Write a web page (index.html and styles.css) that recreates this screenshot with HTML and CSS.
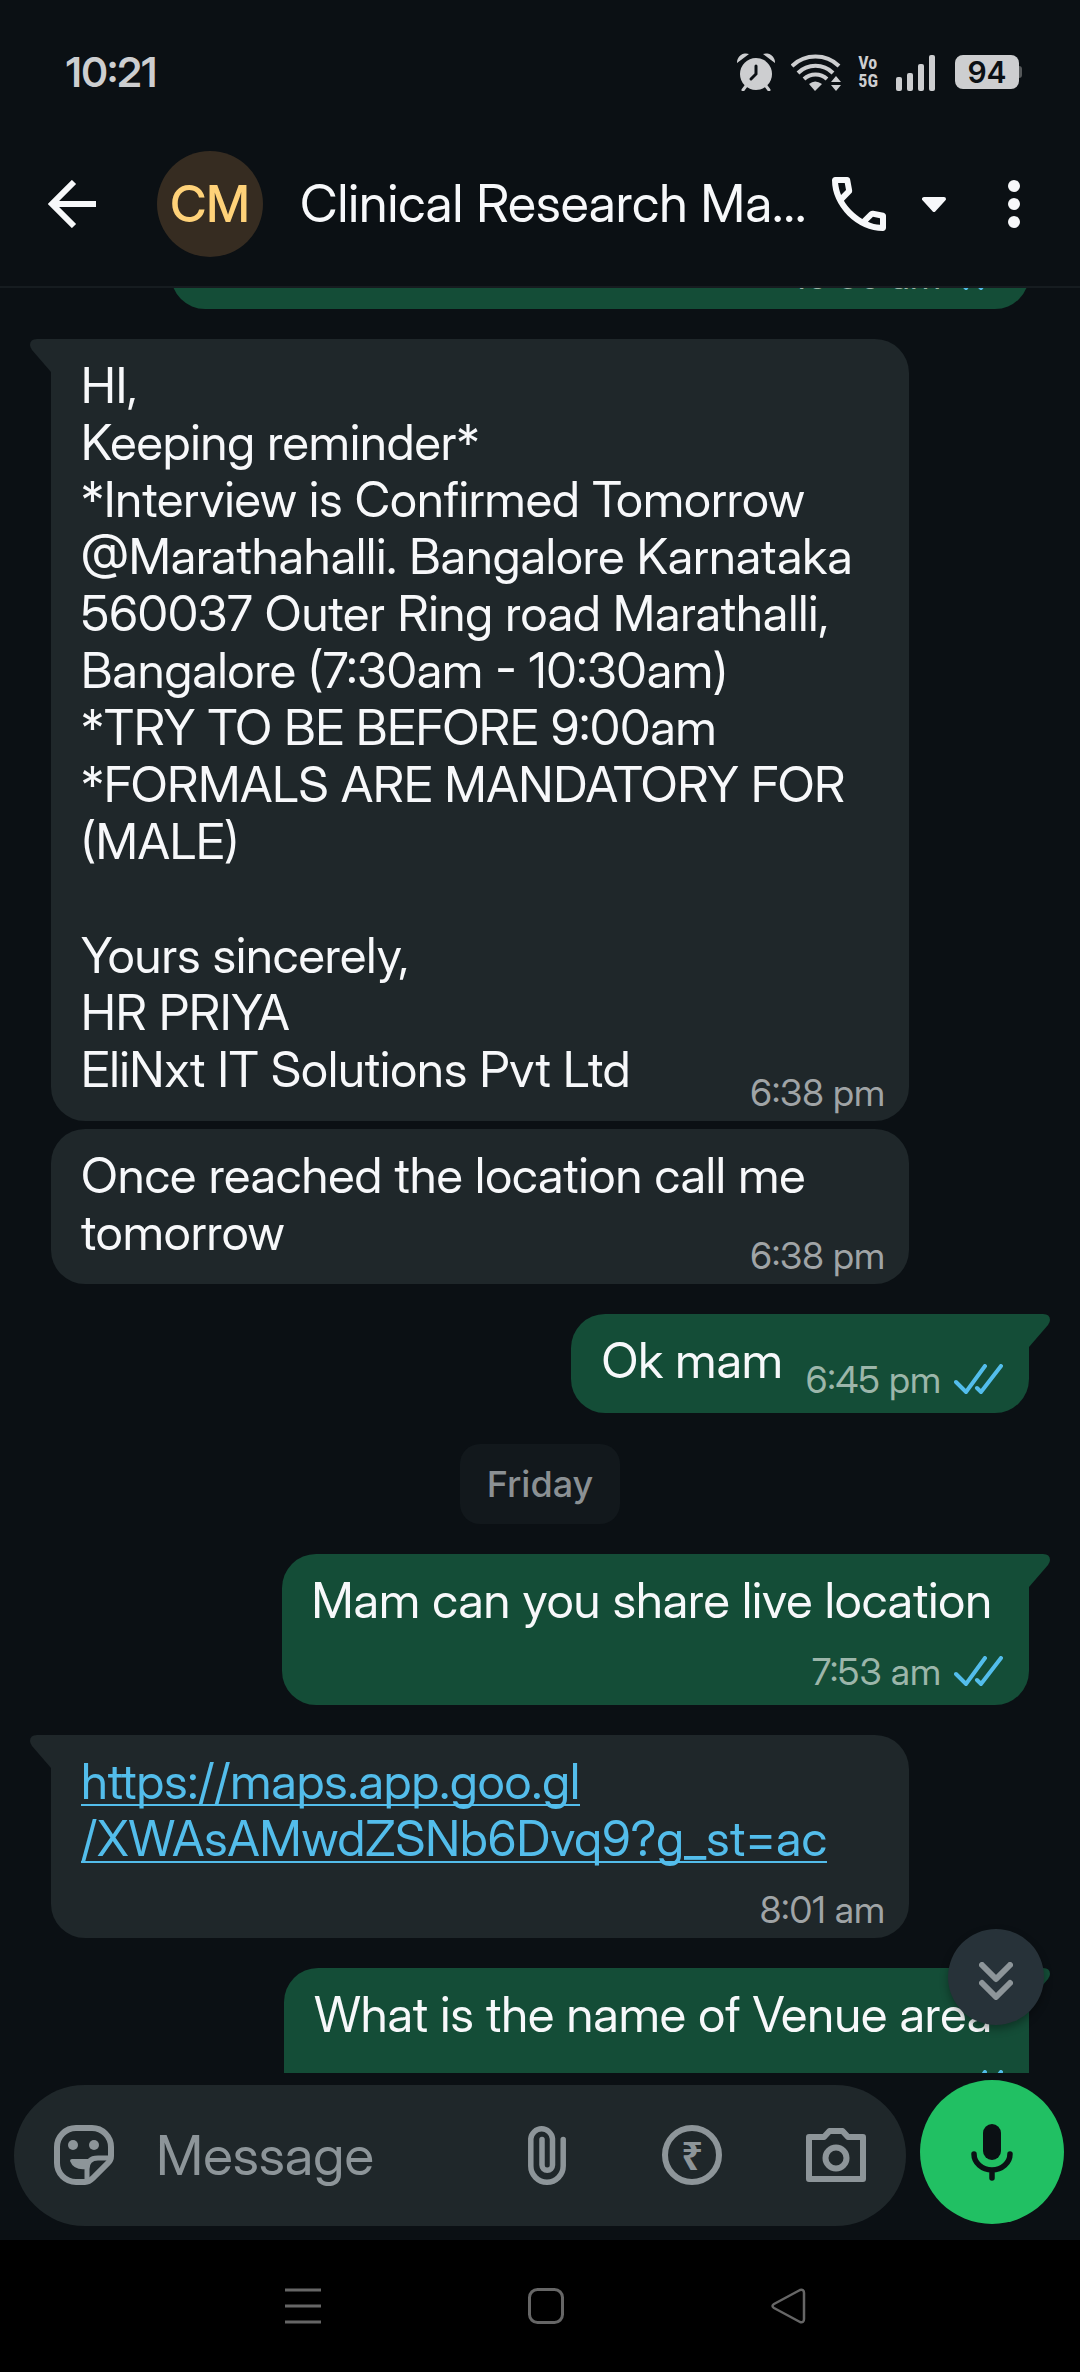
FILE: index.html
```html
<!DOCTYPE html>
<html lang="en">
<head>
<meta charset="utf-8">
<meta name="viewport" content="width=device-width, initial-scale=1">
<title>Clinical Research Ma...</title>
<link rel="stylesheet" href="styles.css">
</head>
<body>
<svg class="defs" aria-hidden="true">
  <symbol id="tail" viewBox="0 0 22 33"><path d="M22 0H7Q0 0 0 6Q0 8 2 11L21 33H22Z" fill="currentColor"/></symbol>
  <symbol id="read" viewBox="0 0 49 30"><path d="M2 18L12 28L31 2M23 24L27 28L47 2" fill="none" stroke="currentColor" stroke-width="4" stroke-linecap="round"/></symbol>
</svg>

<div class="status">
  <time class="clock">10:21</time>
  <div class="indicators">
    <svg class="alarm" width="38" height="38" viewBox="0 0 38 38" fill="#cdced0">
      <circle cx="19" cy="21" r="16"/>
      <path d="M0 10A9 9 0 0 1 12 1ZM38 10A9 9 0 0 0 26 1Z"/>
      <path d="M9 33L6 37M29 33L32 37" stroke="#cdced0" stroke-width="3" stroke-linecap="round"/>
      <path d="M19 13V21L14 26" fill="none" stroke="#0b1014" stroke-width="3" stroke-linecap="round"/>
    </svg>
    <svg class="wifi" width="52" height="37" viewBox="0 0 52 37" fill="none" stroke="#cdced0" stroke-width="4">
      <path d="M1 12A34 34 0 0 1 48 12M7 19A25 25 0 0 1 42 19M13 25A17 17 0 0 1 36 25"/>
      <path d="M18 30Q24 25 31 30L24 37Z" fill="#cdced0" stroke="none"/>
      <path d="M40 28L45 22L50 28ZM40 31L45 37L50 31Z" fill="#cdced0" stroke="none"/>
    </svg>
    <span class="network"><span>Vo</span><span>5G</span></span>
    <svg class="signal" width="40" height="37" viewBox="0 0 40 37" fill="#cdced0">
      <rect x="0" y="23" width="6" height="14" rx="2"/><rect x="11" y="19" width="6" height="18" rx="2"/><rect x="22" y="10" width="6" height="27" rx="2"/><rect x="33" y="1" width="6" height="36" rx="2"/>
    </svg>
    <span class="battery">94</span>
  </div>
</div>

<header class="header">
  <button class="icon-button back" aria-label="Back">
    <svg width="48" height="48" viewBox="0 0 48 48" fill="none" stroke="currentColor" stroke-width="6"><path d="M26 2L4 24L26 46M4 24H48"/></svg>
  </button>
  <div class="avatar">CM</div>
  <h1 class="title">Clinical Research Ma...</h1>
  <button class="icon-button call" aria-label="Call">
    <svg width="54" height="54" viewBox="3 3 18 18" fill="currentColor"><path d="M19.95 21q-3.125 0-6.175-1.362T8.225 15.8q-2.5-2.5-3.862-5.55T3 4.05q0-.45.3-.75T4.05 3H8.1q.35 0 .625.238t.325.562l.65 3.5q.05.4-.025.675T9.4 8.45L6.975 10.9q.5.925 1.187 1.787t1.513 1.663q.775.775 1.625 1.438T13.1 17l2.35-2.35q.225-.225.588-.337t.712-.063l3.45.7q.35.1.575.363T21 15.9v4.05q0 .45-.3.75t-.75.3M6.025 9l1.65-1.65L7.25 5H5.025q.125 1.025.35 2.025T6.025 9m8.95 8.95q.975.425 1.988.675T19 18.95v-2.2l-2.35-.475z"/></svg>
    <svg width="24" height="15" viewBox="0 0 24 15" fill="currentColor" stroke="currentColor" stroke-width="4" stroke-linejoin="round"><path d="M2 2H22L12 13Z"/></svg>
  </button>
  <button class="icon-button" aria-label="More options">
    <svg width="12" height="48" viewBox="0 0 12 48" fill="currentColor"><circle cx="6" cy="6" r="6"/><circle cx="6" cy="24" r="6"/><circle cx="6" cy="42" r="6"/></svg>
  </button>
</header>

<main class="chat">
  <div class="messages">
    <article class="bubble out long stack">
      <p class="meta"><time>10:30 am</time><svg class="ticks"><use href="#read"/></svg></p>
    </article>
    <article class="bubble in long first">
      <svg class="tail"><use href="#tail"/></svg>
      <p class="text">HI,<br>Keeping reminder*<br>*Interview is Confirmed Tomorrow<br>@Marathahalli. Bangalore Karnataka<br>560037 Outer Ring road Marathalli,<br>Bangalore (7:30am - 10:30am)<br>*TRY TO BE BEFORE 9:00am<br>*FORMALS ARE MANDATORY FOR<br>(MALE)<br><br>Yours sincerely,<br>HR PRIYA<br>EliNxt IT Solutions Pvt Ltd</p>
      <p class="meta"><time>6:38 pm</time></p>
    </article>
    <article class="bubble in long">
      <p class="text">Once reached the location call me<br>tomorrow</p>
      <p class="meta"><time>6:38 pm</time></p>
    </article>
    <article class="bubble out first inline">
      <svg class="tail"><use href="#tail"/></svg>
      <p class="text">Ok mam</p>
      <p class="meta"><time>6:45 pm</time><svg class="ticks"><use href="#read"/></svg></p>
    </article>
    <p class="day">Friday</p>
    <article class="bubble out first stack">
      <svg class="tail"><use href="#tail"/></svg>
      <p class="text">Mam can you share live location</p>
      <p class="meta"><time>7:53 am</time><svg class="ticks"><use href="#read"/></svg></p>
    </article>
    <article class="bubble in long first stack">
      <svg class="tail"><use href="#tail"/></svg>
      <p class="text"><a href="https://maps.app.goo.gl/XWAsAMwdZSNb6Dvq9?g_st=ac">https://maps.app.goo.gl<br>/XWAsAMwdZSNb6Dvq9?g_st=ac</a></p>
      <p class="meta"><time>8:01 am</time></p>
    </article>
    <article class="bubble out first stack">
      <svg class="tail"><use href="#tail"/></svg>
      <p class="text">What is the name of Venue area</p>
      <p class="meta"><svg class="ticks"><use href="#read"/></svg></p>
    </article>
  </div>
  <button class="scroll-down" aria-label="Scroll to latest">
    <svg width="34" height="38" viewBox="0 0 34 38" fill="none" stroke="currentColor" stroke-width="6" stroke-linecap="round" stroke-linejoin="round"><path d="M3 3L17 17L31 3M3 21L17 35L31 21"/></svg>
  </button>
</main>

<form class="composer">
  <div class="field">
    <button type="button" class="icon-button" aria-label="Stickers">
      <svg width="60" height="60" viewBox="0 0 60 60" fill="none" stroke="currentColor" stroke-width="6"><path d="M31 57H22A19 19 0 0 1 3 38V22A19 19 0 0 1 22 3H38A19 19 0 0 1 57 22V31Q57 35 54 38L39 53Q35 57 31 57Z"/><path d="M33 56V44Q33 33 44 33H56" stroke-width="5"/><g fill="currentColor" stroke="none"><circle cx="19" cy="20" r="5"/><circle cx="40" cy="20" r="5"/><path d="M16 36Q16 34 18 34H38L33 44Q20 46 16 36Z"/></g></svg>
    </button>
    <input class="input" type="text" placeholder="Message" aria-label="Message">
    <button type="button" class="icon-button" aria-label="Attach">
      <svg width="38" height="60" viewBox="0 0 38 60" fill="none" stroke="currentColor" stroke-width="5.5" stroke-linecap="round"><path d="M35.2 14.5V41A16.2 16.2 0 0 1 2.8 41V13.7A10.9 10.9 0 0 1 24.5 13.7V40A5.2 5.2 0 0 1 14 40V14.5"/></svg>
    </button>
    <button type="button" class="icon-button rupee" aria-label="Payment">₹</button>
    <button type="button" class="icon-button" aria-label="Camera">
      <svg width="60" height="60" viewBox="0 -3 60 60" fill="none" stroke="currentColor" stroke-width="6" stroke-linejoin="round"><path d="M3 9H18L23.500 3H36.500L42 9H57V51H3Z"/><circle cx="30" cy="30" r="10.500"/></svg>
    </button>
  </div>
  <button type="button" class="mic" aria-label="Record voice message">
    <svg width="42" height="57" viewBox="0 0 42 57" fill="none" stroke="currentColor" stroke-width="5.500" stroke-linecap="round"><rect x="12" y="0" width="18" height="36" rx="9" fill="currentColor" stroke="none"/><path d="M3 30A18 16 0 0 0 39 30M21 46V54"/></svg>
  </button>
</form>

<nav class="system-nav">
  <button class="icon-button" aria-label="Recent apps"><svg width="36" height="36" viewBox="0 0 36 36" stroke="currentColor" stroke-width="3"><path d="M0 2H36M0 18H36M0 34H36"/></svg></button>
  <button class="icon-button" aria-label="Home"><svg width="36" height="36" viewBox="0 0 36 36" fill="none" stroke="currentColor" stroke-width="3"><rect x="1.500" y="1.500" width="33" height="33" rx="8"/></svg></button>
  <button class="icon-button" aria-label="Back"><svg width="36" height="36" viewBox="0 0 36 36" fill="none" stroke="currentColor" stroke-width="2.500" stroke-linejoin="round"><path d="M3 16L29 2Q33 1 33 5V31Q33 35 29 34L3 20Q0 18 3 16Z"/></svg></button>
</nav>
</body>
</html>
```
FILE: styles.css
```css
* { box-sizing: border-box; margin: 0; padding: 0; }

body {
  display: flex;
  flex-direction: column;
  height: 100vh;
  background: #0b1014;
  color: #f7f8fa;
  font-family: "Inter Display", Inter, "Liberation Sans", sans-serif;
}

button, input { border: 0; background: none; color: inherit; font: inherit; }
svg { display: block; flex: none; }
.defs { position: absolute; width: 0; height: 0; }
.icon-button { display: flex; align-items: center; justify-content: center; flex: none; }

/* Status bar */
.status {
  display: flex;
  align-items: center;
  justify-content: space-between;
  flex: none;
  padding: 48px 61px 24px 66px;
  color: #cdced0;
}
.clock { font-size: 41px; font-weight: 600; line-height: 48px; }
.indicators { display: flex; align-items: center; }
.alarm { margin-right: 16px; }
.wifi { margin-right: 15px; }
.network {
  display: flex;
  flex-direction: column;
  margin-right: 18px;
  font: bold 18px/18px "Roboto Condensed", "Liberation Sans Narrow", "Liberation Sans", sans-serif;
}
.signal { margin-right: 19px; }
.battery {
  position: relative;
  width: 64px;
  border-radius: 8px;
  background: #cdced0;
  color: #0b1014;
  font-family: Inter, sans-serif;
  font-size: 30px;
  font-weight: 600;
  line-height: 34px;
  text-align: center;
}
.battery::after {
  content: "";
  position: absolute;
  top: 11px;
  right: -3px;
  width: 3px;
  height: 12px;
  border-radius: 0 3px 3px 0;
  background: #55585a;
}

/* Conversation header */
.header {
  display: flex;
  align-items: center;
  flex: none;
  padding: 31px 60px 29px 48px;
  border-bottom: 2px solid #161c20;
}
.back { margin-right: 61px; }
.avatar {
  flex: none;
  width: 106px;
  border-radius: 50%;
  background: #362c21;
  color: #ffd279;
  font-size: 50px;
  font-weight: 500;
  line-height: 106px;
  text-align: center;
}
.title {
  flex: 1;
  min-width: 0;
  margin-left: 37px;
  font-size: 52px;
  font-weight: 400;
  line-height: 60px;
  white-space: nowrap;
}
.call { gap: 36px; margin-right: 62px; }

/* Messages */
.chat { position: relative; flex: 1; min-height: 0; overflow: hidden; }
.messages {
  display: flex;
  flex-direction: column;
  margin-top: -52px;
  padding: 0 51px;
}
.bubble {
  position: relative;
  display: grid;
  width: fit-content;
  margin-top: 8px;
  border-radius: 34px;
}
.bubble:first-child { margin-top: 0; }
.bubble.first { margin-top: 30px; }
.in { align-self: flex-start; padding: 18px 24px 6px 30px; background: #1f272a; color: #f7f8fa; }
.out { align-self: flex-end; padding: 18px 26px 11px 30px; background: #144d37; }
.long { width: calc(100% - 120px); }
.in.first { border-top-left-radius: 0; }
.out.first { border-top-right-radius: 0; }
.tail { position: absolute; top: 0; width: 22px; height: 33px; }
.in .tail { left: -21px; color: #1f272a; }
.out .tail { right: -21px; color: #144d37; transform: scaleX(-1); }

.text { grid-area: 1 / 1; margin-bottom: 17px; font-size: 49px; line-height: 57px; }
.meta {
  display: flex;
  grid-area: 1 / 1;
  align-self: end;
  justify-self: end;
  gap: 13px;
  color: #a0a4a6;
  font-size: 37px;
  line-height: 44px;
}
.out .meta { color: #9cb6aa; }
.ticks { width: 49px; height: 30px; margin-top: 6px; color: #53bdeb; }
.stack, .inline { display: flex; }
.stack { flex-direction: column; gap: 21px; }
.stack .text { margin: 0; padding-right: 11px; }
.stack .meta { align-self: flex-end; min-height: 44px; }
.inline { gap: 23px; }
.inline .text { margin-bottom: 13px; }
.text a { color: #53bdeb; text-decoration-thickness: 2px; text-underline-offset: 5px; text-decoration-skip-ink: none; }

.day {
  align-self: center;
  margin-top: 31px;
  padding: 0 27px;
  border-radius: 20px;
  background: #12181c;
  color: #8b9093;
  font-family: Inter, sans-serif;
  font-size: 36px;
  font-weight: 500;
  line-height: 80px;
}

.scroll-down {
  position: absolute;
  right: 36px;
  bottom: 48px;
  display: flex;
  align-items: center;
  justify-content: center;
  width: 96px;
  height: 96px;
  padding-top: 8px;
  border-radius: 50%;
  background: #273239;
  box-shadow: 0 4px 8px #0005;
  color: #8d9599;
}

/* Composer */
.composer {
  display: flex;
  align-items: flex-end;
  flex: none;
  gap: 14px;
  padding: 7px 16px 14px 14px;
}
.field {
  display: flex;
  align-items: center;
  flex: 1;
  min-width: 0;
  padding: 35px 40px 36px;
  border-radius: 71px;
  background: #1f272a;
  color: #8d9599;
}
.input { flex: 1; min-width: 0; height: 70px; margin-left: 42px; font-size: 55px; line-height: 70px; outline: 0; }
.input::placeholder { color: #8d9599; opacity: 1; }
.rupee {
  width: 60px;
  height: 60px;
  margin: 0 84px 0 96px;
  border: 6px solid currentColor;
  border-radius: 50%;
  font: bold 38px/48px "Noto Sans", sans-serif;
}
.mic {
  display: flex;
  align-items: center;
  justify-content: center;
  flex: none;
  width: 144px;
  height: 144px;
  margin-bottom: 2px;
  border-radius: 50%;
  background: #21c063;
  color: #0b1014;
}

/* System navigation */
.system-nav {
  display: grid;
  grid-template-columns: repeat(3, 1fr);
  flex: none;
  padding: 48px 170px 48px 182px;
  background: #000;
  color: #666;
}
```
